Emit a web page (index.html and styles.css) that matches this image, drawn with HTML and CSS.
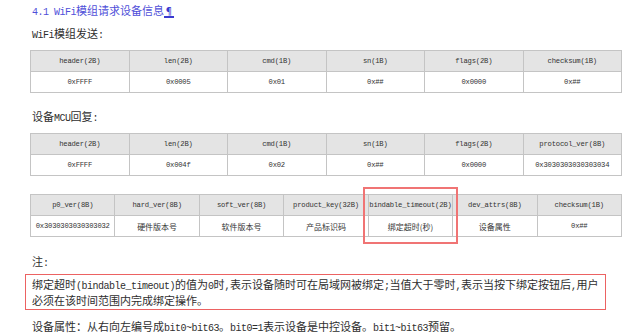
FILE: index.html
```html
<!DOCTYPE html>
<html lang="zh-CN">
<head>
<meta charset="utf-8">
<title>4.1 WiFi模组请求设备信息</title>
<link rel="stylesheet" href="styles.css">
</head>
<body>
<div class="doc">
  <h1 class="title"><span class="en">4.1 WiFi</span>模组请求设备信息<span class="pil">¶</span></h1>

  <p class="label label-first"><span class="en">WiFi</span>模组发送<span class="en">:</span></p>
  <table class="grid six">
    <tr class="head">
      <td>header(2B)</td><td>len(2B)</td><td>cmd(1B)</td><td>sn(1B)</td><td>flags(2B)</td><td>checksum(1B)</td>
    </tr>
    <tr>
      <td>0xFFFF</td><td>0x0005</td><td>0x01</td><td>0x##</td><td>0x0000</td><td>0x##</td>
    </tr>
  </table>

  <p class="label label-second">设备<span class="en">MCU</span>回复<span class="en">:</span></p>
  <table class="grid six">
    <tr class="head">
      <td>header(2B)</td><td>len(2B)</td><td>cmd(1B)</td><td>sn(1B)</td><td>flags(2B)</td><td>protocol_ver(8B)</td>
    </tr>
    <tr>
      <td>0xFFFF</td><td>0x004f</td><td>0x02</td><td>0x##</td><td>0x0000</td><td>0x3030303030303034</td>
    </tr>
  </table>

  <div class="table-wrap">
    <table class="grid seven">
      <tr class="head">
        <td>p0_ver(8B)</td><td>hard_ver(8B)</td><td>soft_ver(8B)</td><td>product_key(32B)</td><td>bindable_timeout(2B)</td><td>dev_attrs(8B)</td><td>checksum(1B)</td>
      </tr>
      <tr>
        <td>0x3030303030303032</td><td class="cjk">硬件版本号</td><td class="cjk">软件版本号</td><td class="cjk">产品标识码</td><td class="cjk">绑定超时(秒)</td><td class="cjk">设备属性</td><td>0x##</td>
      </tr>
    </table>
    <div class="mark"></div>
  </div>

  <p class="label label-note">注<span class="en">:</span></p>
  <div class="note">
    <p class="line">绑定超时<span class="en">(bindable_timeout)</span>的值为<span class="en">0</span>时<span class="en">,</span>表示设备随时可在局域网被绑定<span class="en">;</span>当值大于零时<span class="en">,</span>表示当按下绑定按钮后<span class="en">,</span>用户</p>
    <p class="line">必须在该时间范围内完成绑定操作。</p>
  </div>

  <p class="label label-last">设备属性：从右向左编号成<span class="en">bit0~bit63</span>。<span class="en">bit0=1</span>表示设备是中控设备。<span class="en">bit1~bit63</span>预留。</p>
</div>
</body>
</html>
```

FILE: styles.css
```css
html, body {
  margin: 0;
  padding: 0;
  background: #ffffff;
}

body {
  font-family: "Noto Sans CJK SC", "Noto Sans", sans-serif;
  font-size: 11px;
  color: #2e2e2e;
}

.doc {
  padding-top: 2px;
  width: 625px;
}

.en {
  font-family: "Liberation Mono", "DejaVu Sans Mono", monospace;
  font-size: 10px;
  letter-spacing: -0.5px;
}

.title {
  margin: 0 0 0 32px;
  font-size: 11px;
  font-weight: normal;
  line-height: 16px;
  height: 16px;
  color: #4f4fd9;
}

.pil {
  font-size: 10px;
  text-decoration: underline;
  text-decoration-thickness: 2px;
  color: #3a3ad0;
}

.label {
  margin: 0 0 0 32px;
  line-height: 16px;
  height: 16px;
  white-space: nowrap;
}

.label-first { margin-top: 7px; }
.label-second { margin-top: 15px; }
.label-note { margin-top: 16px; }
.label-last { margin-top: 8px; }

.grid {
  margin-left: 30px;
  width: 592px;
  border-collapse: collapse;
  table-layout: fixed;
}

.label-first + .grid,
.label-second + .grid {
  margin-top: 9px;
}

.grid td {
  border: 1px solid #c4c4c4;
  height: 20px;
  padding: 0;
  text-align: center;
  vertical-align: middle;
  font-family: "Liberation Mono", "DejaVu Sans Mono", monospace;
  font-size: 7.2px;
  letter-spacing: -0.2px;
  color: #333333;
  white-space: nowrap;
}

.grid td.cjk {
  font-family: "Noto Sans CJK SC", "Noto Sans", sans-serif;
  font-size: 8px;
  letter-spacing: 0;
}

.grid tr.head td {
  background: #e4e4e4;
}

.table-wrap {
  position: relative;
  margin-top: 18px;
}

.mark {
  position: absolute;
  z-index: 2;
  left: 363px;
  top: -7px;
  width: 91px;
  height: 53px;
  border: 2px solid #f07474;
}

.note {
  margin: 5px 0 0 25px;
  width: 573px;
  height: 33px;
  padding: 1px 0 0 6px;
  border: 1px solid #ec6262;
}

.line {
  margin: 0;
  line-height: 16px;
  height: 16px;
  white-space: nowrap;
}
```
